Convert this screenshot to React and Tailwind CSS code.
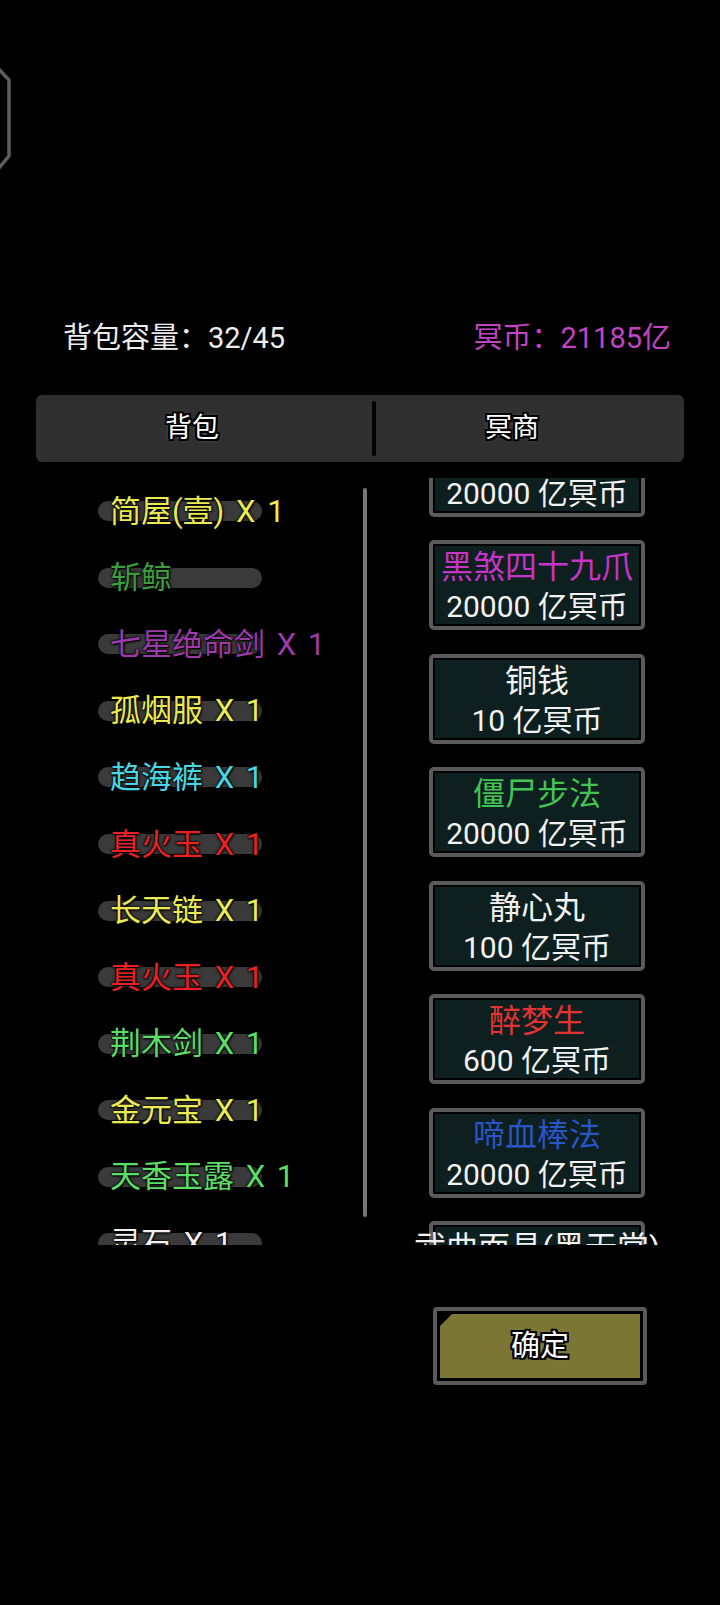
const FONT = "font-['Roboto','Noto_Sans_CJK_SC',sans-serif]";

const GLOW = "[text-shadow:0_0_2px_#000,0_0_3px_#000,1px_1px_2px_#000]";
const OUTLINE =
  "[text-shadow:-2px_0_0_#000,2px_0_0_#000,0_-2px_0_#000,0_2px_0_#000,-2px_-2px_0_#000,2px_2px_0_#000,-2px_2px_0_#000,2px_-2px_0_#000,0_0_5px_#888]";

const bagItems = [
  { name: "简屋(壹) X 1", color: "text-[#ecea52]" },
  { name: "斩鲸", color: "text-[#3c9c3e]" },
  { name: "七星绝命剑 X 1", color: "text-[#9c3aaa]" },
  { name: "孤烟服 X 1", color: "text-[#ecea52]" },
  { name: "趋海裤 X 1", color: "text-[#48d6e2]" },
  { name: "真火玉 X 1", color: "text-[#e82222]" },
  { name: "长天链 X 1", color: "text-[#ecea52]" },
  { name: "真火玉 X 1", color: "text-[#e82222]" },
  { name: "荆木剑 X 1", color: "text-[#5ade64]" },
  { name: "金元宝 X 1", color: "text-[#ecea52]" },
  { name: "天香玉露 X 1", color: "text-[#5ade64]" },
  { name: "灵石 X 1", color: "text-[#f0f0f0]" },
];

const shopItems = [
  { name: "蛊毒秘术", color: "text-[#ffffff]", price: "20000 亿冥币" },
  { name: "黑煞四十九爪", color: "text-[#c634c8]", price: "20000 亿冥币" },
  { name: "铜钱", color: "text-[#f2f2f2]", price: "10 亿冥币" },
  { name: "僵尸步法", color: "text-[#42c452]", price: "20000 亿冥币" },
  { name: "静心丸", color: "text-[#f2f2f2]", price: "100 亿冥币" },
  { name: "醉梦生", color: "text-[#e23434]", price: "600 亿冥币" },
  { name: "啼血棒法", color: "text-[#2a55c4]", price: "20000 亿冥币" },
  { name: "武曲面具(黑无常)", color: "text-[#f2f2f2]", price: "20000 亿冥币" },
];

function BagRow({ item }) {
  return (
    <div className="h-[66.56px] grid items-center pl-[98px]">
      <div className="col-start-1 row-start-1 w-[164px] h-[20px] rounded-full bg-[#3a3a3a]" />
      <div
        className={`col-start-1 row-start-1 pl-[12px] text-[31px] leading-none whitespace-nowrap [word-spacing:4px] ${item.color} ${GLOW}`}
      >
        {item.name}
      </div>
    </div>
  );
}

function ShopCard({ item }) {
  return (
    <div className="w-[216px] h-[90px] mb-[23.5px] rounded-[5px] border-[4px] border-[#5a5a5a] bg-black p-[2px] flex">
      <div className="flex-1 min-w-0 bg-[#0e1f1f] flex flex-col items-center justify-center gap-[9px] pt-[3px] whitespace-nowrap">
        <div className={`text-[32px] leading-none ${item.color}`}>{item.name}</div>
        <div className="text-[30px] leading-none text-[#f2f2f2]">{item.price}</div>
      </div>
    </div>
  );
}

export default function App() {
  return (
    <div className={`w-[720px] h-[1605px] bg-black overflow-hidden flex flex-col ${FONT}`}>
      <div className="h-[322px]">
        <svg width="16" height="124" viewBox="0 0 16 124" className="mt-[58px]">
          <path
            d="M-6 6 L9 22 L9 98 L-6 116"
            fill="none"
            stroke="#5e5e5e"
            strokeWidth="3.5"
            strokeLinejoin="round"
          />
        </svg>
      </div>

      <div className="h-[32px] flex items-center justify-between pl-[63px] pr-[49px] text-[29px] leading-none">
        <div className="text-[#ececec]">背包容量：32/45</div>
        <div className="text-[#c244c4]">冥币：21185亿</div>
      </div>

      <div className="mt-[41px] ml-[36px] w-[648px] h-[67px] rounded-[6px] bg-[#2f2f2f] flex items-center">
        <div className={`w-[336px] text-center pr-[24px] text-[27px] text-white ${OUTLINE}`}>背包</div>
        <div className="w-[4px] h-[55px] rounded-full bg-black" />
        <div className={`flex-1 text-center pr-[36px] text-[27px] text-white ${OUTLINE}`}>冥商</div>
      </div>

      <div className="mt-[16px] h-[767px] flex">
        <div className="w-[363px] overflow-hidden">
          {bagItems.map((item, i) => (
            <BagRow key={i} item={item} />
          ))}
        </div>
        <div className="w-[4px] h-[729px] mt-[10px] rounded-full bg-[#777777]" />
        <div className="flex-1 overflow-hidden">
          <div className="mt-[-51.5px] pl-[62px]">
            {shopItems.map((item, i) => (
              <ShopCard key={i} item={item} />
            ))}
          </div>
        </div>
      </div>

      <div className="mt-[62px] ml-[433px] w-[214px] h-[78px] rounded-[4px] border-[4px] border-[#5a5a5a] bg-black p-[3px] flex">
        <div className="flex-1 bg-[#7b7634] flex items-center justify-center [clip-path:polygon(12px_0,100%_0,100%_100%,0_100%,0_12px)]">
          <span className={`text-[29px] text-white leading-none ${OUTLINE}`}>确定</span>
        </div>
      </div>
    </div>
  );
}
